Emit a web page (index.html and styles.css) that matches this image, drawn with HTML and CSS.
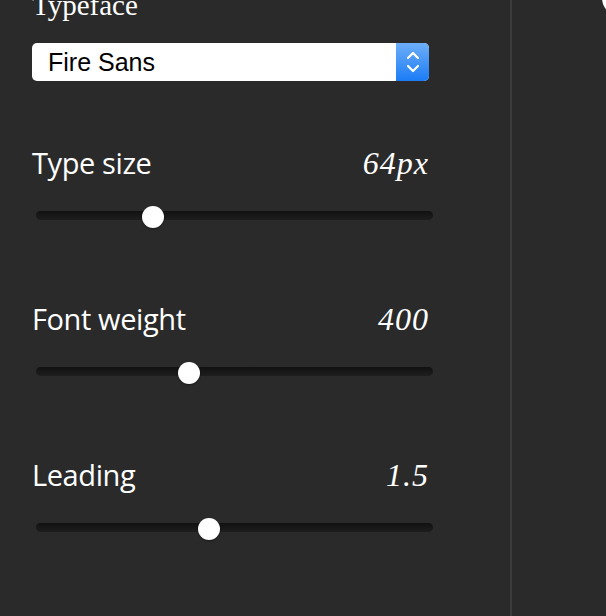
FILE: index.html
```
<!DOCTYPE html>
<html lang="en">

<head>
    <meta charset="UTF-8">
    <meta name="viewport" content="width=device-width, initial-scale=1.0">
    <title>Type Controls</title>
    <link rel="stylesheet" href="styles.css">
</head>

<body>
    <div class="app">
        <div class="sidebar">
            <div class="control">
                <label class="caption">Typeface</label>
                <div class="select">
                    <span class="select-value">Fire Sans</span>
                    <span class="stepper">
                        <svg width="16" height="26" viewBox="0 0 16 26">
                            <path d="M3 9 L8 4 L13 9" fill="none" stroke="#fff" stroke-width="2.2" stroke-linecap="round" stroke-linejoin="round"/>
                            <path d="M3 17 L8 22 L13 17" fill="none" stroke="#fff" stroke-width="2.2" stroke-linecap="round" stroke-linejoin="round"/>
                        </svg>
                    </span>
                </div>
            </div>
            <div class="control">
                <div class="row">
                    <span class="label">Type size</span>
                    <span class="value">64px</span>
                </div>
                <div class="track">
                    <span class="thumb" style="left: 29.5%"></span>
                </div>
            </div>
            <div class="control">
                <div class="row">
                    <span class="label">Font weight</span>
                    <span class="value">400</span>
                </div>
                <div class="track">
                    <span class="thumb" style="left: 38.5%"></span>
                </div>
            </div>
            <div class="control">
                <div class="row">
                    <span class="label">Leading</span>
                    <span class="value">1.5</span>
                </div>
                <div class="track">
                    <span class="thumb" style="left: 43.5%"></span>
                </div>
            </div>
        </div>
        <div class="preview">
            <span class="dot"></span>
        </div>
    </div>
</body>

</html>
```
FILE: styles.css
```
body,
html {
    margin: 0;
    padding: 0;
    height: 100%;
    overflow: hidden;
    background: #2a2a2a;
    color: #fff;
}

.app {
    display: flex;
    height: 100%;
}

.sidebar {
    width: 512px;
    flex-shrink: 0;
    box-sizing: border-box;
    padding: 0 81px 0 32px;
    border-right: 2px solid #3b3b3b;
}

.preview {
    flex: 1;
    position: relative;
    overflow: hidden;
}

.dot {
    position: absolute;
    top: -20px;
    left: 90px;
    width: 36px;
    height: 36px;
    border-radius: 50%;
    background: #fff;
}

.caption {
    display: block;
    margin-top: -12px;
    font-family: "Liberation Serif", serif;
    font-size: 29px;
    line-height: 34px;
}

.select {
    display: flex;
    margin-top: 21px;
    height: 38px;
    background: #fff;
    border-radius: 5px;
    overflow: hidden;
}

.select-value {
    flex: 1;
    padding-left: 16px;
    color: #000;
    font-family: "Liberation Sans", Arial, sans-serif;
    font-size: 25px;
    line-height: 39px;
}

.stepper {
    width: 33px;
    display: flex;
    align-items: center;
    justify-content: center;
    background: linear-gradient(#6eaef8, #1b7cf6);
}

.control:nth-child(2) {
    margin-top: 64px;
}

.control:nth-child(n+3) {
    margin-top: 81px;
}

.row {
    display: flex;
    justify-content: space-between;
    align-items: baseline;
}

.label {
    font-family: "Open Sans", sans-serif;
    font-size: 29px;
    line-height: 36px;
    letter-spacing: -0.4px;
}

.value {
    font-family: "Liberation Serif", serif;
    font-style: italic;
    font-size: 32px;
    line-height: 36px;
    letter-spacing: 1px;
}

.track {
    position: relative;
    margin: 30px -4px 0 4px;
    height: 9px;
    border-radius: 5px;
    background: linear-gradient(#111, #1e1e1e);
}

.thumb {
    position: absolute;
    top: -5px;
    width: 22px;
    height: 22px;
    margin-left: -11px;
    border-radius: 50%;
    background: #fff;
    box-shadow: 0 1px 2px rgba(0, 0, 0, 0.4);
}
```
